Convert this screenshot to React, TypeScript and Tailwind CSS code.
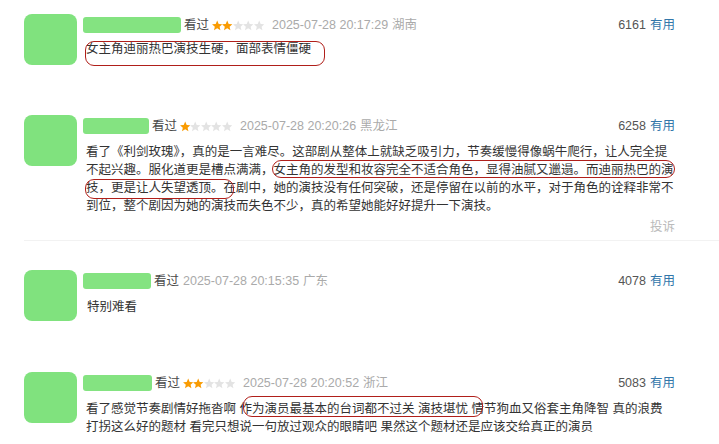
import React from "react";

const FONT = '"Liberation Sans", "Noto Sans CJK SC", sans-serif';

function Star({ on }: { on: boolean }) {
  return (
    <svg width="11" height="11" viewBox="1.5 1.5 21 21">
      <path
        d="M12 1.8l3 7 7.4.6-5.6 4.9 1.7 7.3L12 17.7l-6.5 3.9 1.7-7.3L1.6 9.4 9 8.8z"
        fill={on ? "#f99b01" : "#e3e3e3"}
      />
    </svg>
  );
}

function Stars({ n }: { n: number }) {
  return (
    <div className="flex items-center ml-[3px] mr-[8px] w-[52px] justify-between">
      {[0, 1, 2, 3, 4].map((i) => (
        <Star key={i} on={i < n} />
      ))}
    </div>
  );
}

function Header({
  nameW,
  stars,
  date,
  region,
  votes,
}: {
  nameW: number;
  stars: number;
  date: string;
  region: string;
  votes: string;
}) {
  return (
    <div className="flex items-center h-[22px]">
      <div
        className="h-[16px] rounded-[3px] bg-[#84e381] blur-[0.5px]"
        style={{ width: nameW }}
      />
      <span className="ml-[3px] text-[#494949]">看过</span>
      {stars > 0 ? <Stars n={stars} /> : <span className="w-[4px]" />}
      <span className="text-[#aaaaaa]">{date}</span>
      <span className="ml-[4px] text-[#aaaaaa]">{region}</span>
      <span className="ml-auto text-[#555555]">{votes}</span>
      <span className="ml-[4px] text-[#3377aa]">有用</span>
    </div>
  );
}

function Avatar() {
  return <div className="w-[53px] h-[51px] rounded-[8px] bg-[#80e27e] shrink-0" />;
}

function Mark({ l, t, w, h }: { l: number; t: number; w: number; h: number }) {
  return (
    <div
      className="absolute border-[1.5px] border-[#b01f1a] rounded-[9px]"
      style={{ left: l, top: t, width: w, height: h }}
    />
  );
}

export default function App() {
  return (
    <div
      className="w-[719px] h-[444px] bg-white overflow-hidden pl-[24px] pt-[14px] flex flex-col text-[12.5px] leading-[18px]"
      style={{ fontFamily: FONT }}
    >
      {/* Comment 1 */}
      <div className="flex h-[101px] shrink-0">
        <Avatar />
        <div className="ml-[6px] w-[592px] flex flex-col">
          <Header nameW={98} stars={2} date="2025-07-28 20:17:29" region="湖南" votes="6161" />
          <div className="relative mt-[4px] pl-[3px] text-[#333333]">
            女主角迪丽热巴演技生硬，面部表情僵硬
            <Mark l={2} t={1} w={240} h={25} />
          </div>
        </div>
      </div>

      {/* Comment 2 */}
      <div className="flex h-[125px] shrink-0">
        <Avatar />
        <div className="ml-[6px] w-[592px] flex flex-col">
          <Header nameW={66} stars={1} date="2025-07-28 20:20:26" region="黑龙江" votes="6258" />
          <div className="relative mt-[6px] pl-[3px] text-[#333333] whitespace-nowrap">
            看了《利剑玫瑰》，真的是一言难尽。这部剧从整体上就缺乏吸引力，节奏缓慢得像蜗牛爬行，让人完全提
            <br />
            不起兴趣。服化道更是槽点满满，女主角的发型和妆容完全不适合角色，显得油腻又邋遢。而迪丽热巴的演
            <br />
            技，更是让人失望透顶。在剧中，她的演技没有任何突破，还是停留在以前的水平，对于角色的诠释非常不
            <br />
            到位，整个剧因为她的演技而失色不少，真的希望她能好好提升一下演技。
            <Mark l={189} t={17} w={403} h={18} />
            <Mark l={2} t={36} w={149} h={20} />
          </div>
          <div className="mt-[3px] text-right text-[#bbbbbb]">投诉</div>
        </div>
      </div>

      <div className="h-px bg-[#f2f2f2] shrink-0" />

      {/* Comment 3 */}
      <div className="flex h-[102px] mt-[29px] shrink-0">
        <Avatar />
        <div className="ml-[6px] w-[592px] flex flex-col">
          <Header nameW={68} stars={0} date="2025-07-28 20:15:35" region="广东" votes="4078" />
          <div className="mt-[6px] pl-[4px] text-[#333333]">特别难看</div>
        </div>
      </div>

      {/* Comment 4 */}
      <div className="flex shrink-0">
        <Avatar />
        <div className="ml-[6px] w-[592px] flex flex-col">
          <Header nameW={69} stars={2} date="2025-07-28 20:20:52" region="浙江" votes="5083" />
          <div className="relative mt-[6px] pl-[3px] text-[#333333] whitespace-nowrap">
            看了感觉节奏剧情好拖沓啊 作为演员最基本的台词都不过关 演技堪忧 情节狗血又俗套主角降智 真的浪费
            <br />
            打拐这么好的题材 看完只想说一句放过观众的眼睛吧 果然这个题材还是应该交给真正的演员
            <Mark l={160} t={-4} w={240} h={21} />
          </div>
        </div>
      </div>
    </div>
  );
}
